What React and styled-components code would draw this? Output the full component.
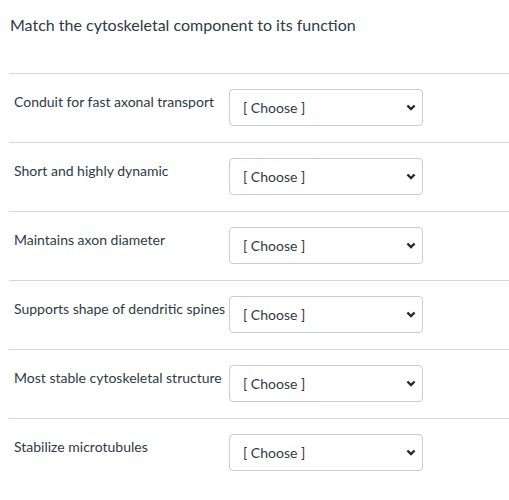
import React from "react";
import styled, { createGlobalStyle } from "styled-components";

const GlobalStyle = createGlobalStyle`
  body {
    margin: 0;
    background: #fff;
    font-family: Lato, "Liberation Sans", sans-serif;
    color: #2d3b45;
  }
`;

const Page = styled.div`
  padding: 14px 0 0 9px;
`;

const Title = styled.h1`
  margin: 0 0 0 1px;
  font-size: 16px;
  font-weight: 400;
  line-height: 22px;
  height: 59px;
`;

const Row = styled.div`
  display: grid;
  grid-template-columns: 215px 194px;
  align-items: start;
  border-top: 1px solid #d4d8db;
  padding: 15px 0 16px 5px;
  height: 37px;
`;

const Label = styled.div`
  font-size: 14px;
  line-height: 18px;
  padding-top: 4px;
`;

const SelectWrap = styled.div`
  position: relative;
  width: 194px;
  height: 37px;
`;

const Select = styled.select`
  appearance: none;
  width: 100%;
  height: 100%;
  box-sizing: border-box;
  border: 1px solid #c7cdd1;
  border-radius: 4px;
  background: #fff;
  padding: 0 30px 0 13px;
  font-family: Lato, "Liberation Sans", sans-serif;
  font-size: 14px;
  color: #2d3b45;
`;

const Chevron = styled.svg`
  position: absolute;
  right: 7px;
  top: 15px;
  pointer-events: none;
`;

const items = [
  "Conduit for fast axonal transport",
  "Short and highly dynamic",
  "Maintains axon diameter",
  "Supports shape of dendritic spines",
  "Most stable cytoskeletal structure",
  "Stabilize microtubules",
];

const App = () => {
  return (
    <>
      <GlobalStyle />
      <Page>
        <Title>Match the cytoskeletal component to its function</Title>
        {items.map((text) => (
          <Row key={text}>
            <Label>{text}</Label>
            <SelectWrap>
              <Select defaultValue="">
                <option value="">[ Choose ]</option>
              </Select>
              <Chevron width="10" height="7" viewBox="0 0 10 7">
                <path
                  d="M1.4 1.5 L5 5 L8.6 1.5"
                  fill="none"
                  stroke="#1f2a33"
                  strokeWidth="2.4"
                />
              </Chevron>
            </SelectWrap>
          </Row>
        ))}
      </Page>
    </>
  );
};

export default App;
